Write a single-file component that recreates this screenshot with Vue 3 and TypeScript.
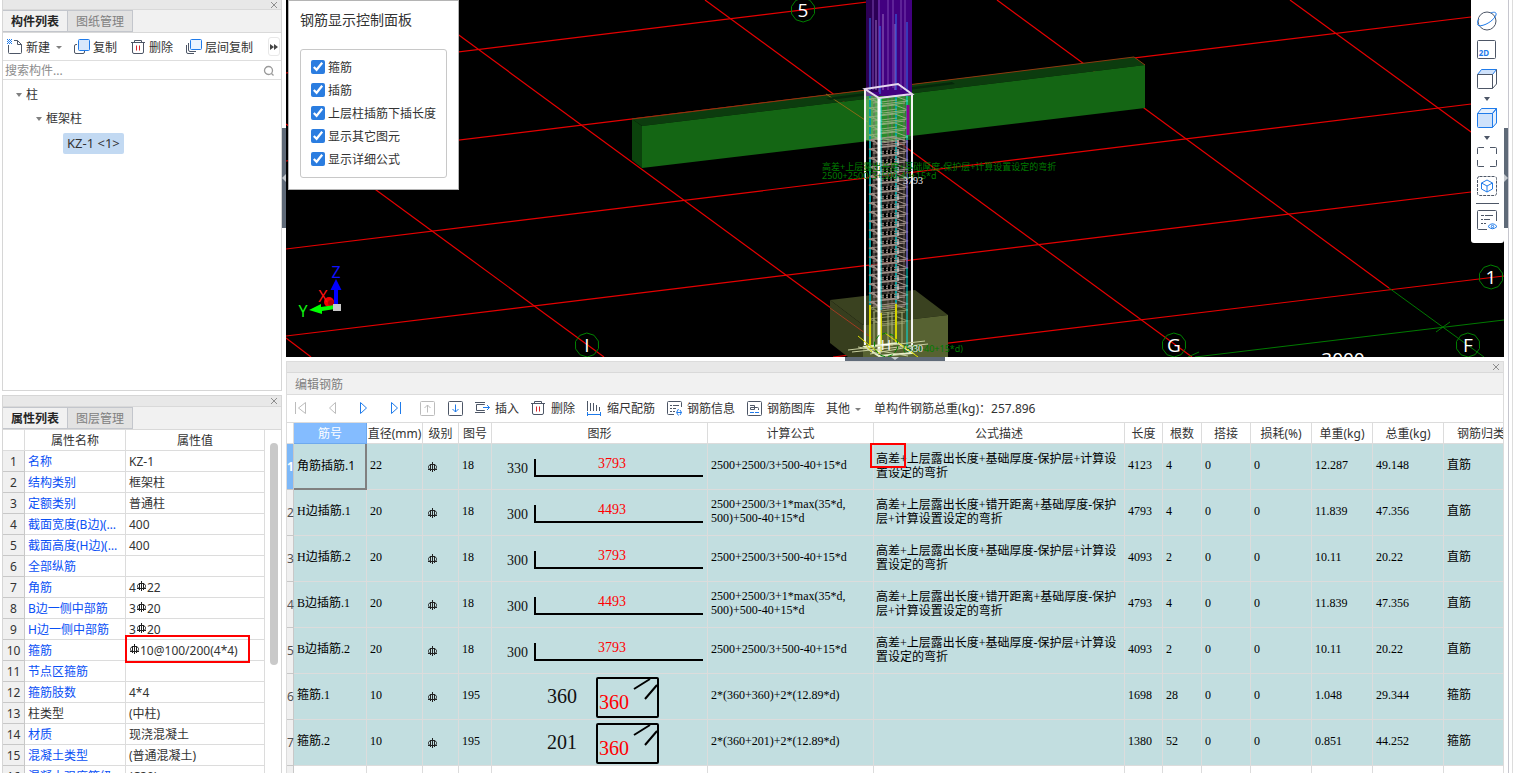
<script setup lang="ts">
import { ref } from 'vue'

interface Property {
  name: string
  value: string
  rebar?: string
  plain?: boolean
  marked?: boolean
}

interface Bar {
  name: string
  diameter: number
  figure: number
  shape: 'hook' | 'stirrup'
  side: number
  main: number
  formula: string
  note: string
  length: number
  count: number
  unit: string
  total: string
  kind: string
}

const properties: Property[] = [
  { name: '名称', value: 'KZ-1' },
  { name: '结构类别', value: '框架柱' },
  { name: '定额类别', value: '普通柱' },
  { name: '截面宽度(B边)(mm)', value: '400' },
  { name: '截面高度(H边)(mm)', value: '400' },
  { name: '全部纵筋', value: '' },
  { name: '角筋', value: '4', rebar: '22' },
  { name: 'B边一侧中部筋', value: '3', rebar: '20' },
  { name: 'H边一侧中部筋', value: '3', rebar: '20' },
  { name: '箍筋', value: '', rebar: '10@100/200(4*4)', marked: true },
  { name: '节点区箍筋', value: '' },
  { name: '箍筋肢数', value: '4*4' },
  { name: '柱类型', value: '(中柱)', plain: true },
  { name: '材质', value: '现浇混凝土' },
  { name: '混凝土类型', value: '(普通混凝土)' },
  { name: '混凝土强度等级', value: '(C30)' },
]

const shortFormula = '2500+2500/3+500-40+15*d'
const longFormula = '2500+2500/3+1*max(35*d,\n500)+500-40+15*d'
const shortNote = '高差+上层露出长度+基础厚度-保护层+计算设\n置设定的弯折'
const longNote = '高差+上层露出长度+错开距离+基础厚度-保护\n层+计算设置设定的弯折'

const bars: Bar[] = [
  { name: '角筋插筋.1', diameter: 22, figure: 18, shape: 'hook', side: 330, main: 3793, formula: shortFormula, note: shortNote, length: 4123, count: 4, unit: '12.287', total: '49.148', kind: '直筋' },
  { name: 'H边插筋.1', diameter: 20, figure: 18, shape: 'hook', side: 300, main: 4493, formula: longFormula, note: longNote, length: 4793, count: 4, unit: '11.839', total: '47.356', kind: '直筋' },
  { name: 'H边插筋.2', diameter: 20, figure: 18, shape: 'hook', side: 300, main: 3793, formula: shortFormula, note: shortNote, length: 4093, count: 2, unit: '10.11', total: '20.22', kind: '直筋' },
  { name: 'B边插筋.1', diameter: 20, figure: 18, shape: 'hook', side: 300, main: 4493, formula: longFormula, note: longNote, length: 4793, count: 4, unit: '11.839', total: '47.356', kind: '直筋' },
  { name: 'B边插筋.2', diameter: 20, figure: 18, shape: 'hook', side: 300, main: 3793, formula: shortFormula, note: shortNote, length: 4093, count: 2, unit: '10.11', total: '20.22', kind: '直筋' },
  { name: '箍筋.1', diameter: 10, figure: 195, shape: 'stirrup', side: 360, main: 360, formula: '2*(360+360)+2*(12.89*d)', note: '', length: 1698, count: 28, unit: '1.048', total: '29.344', kind: '箍筋' },
  { name: '箍筋.2', diameter: 10, figure: 195, shape: 'stirrup', side: 201, main: 360, formula: '2*(360+201)+2*(12.89*d)', note: '', length: 1380, count: 52, unit: '0.851', total: '44.252', kind: '箍筋' },
]

const headers = ['直径(mm)', '级别', '图号', '图形', '计算公式', '公式描述', '长度', '根数', '搭接', '损耗(%)', '单重(kg)', '总重(kg)', '钢筋归类']

const options = ref([
  { label: '箍筋', on: true },
  { label: '插筋', on: true },
  { label: '上层柱插筋下插长度', on: true },
  { label: '显示其它图元', on: true },
  { label: '显示详细公式', on: true },
])

const keyword = ref('')

// Axis grid lines of the 3D view: x1, y1, x2, y2
const gridLines = [
  [286, 73, 884, 0], [286, 161, 1504, 13], [286, 249, 1504, 100], [286, 336, 1504, 188], [833, 357, 1504, 276],
  [411, 0, 895, 355], [286, 124, 604, 357], [286, 338, 311, 357], [705, 0, 1192, 357], [997, 0, 1389, 288], [1290, 0, 1504, 156],
]

const bubbles = [
  { x: 803, y: 10, text: '5' },
  { x: 587, y: 345, text: 'I' },
  { x: 1174, y: 345, text: 'G' },
  { x: 1468, y: 345, text: 'F' },
  { x: 1491, y: 277, text: '1' },
]

function octagon(cx: number, cy: number): string {
  const pts: string[] = []
  for (let i = 0; i < 10; i++) {
    const a = (i * Math.PI) / 5 + 0.3
    pts.push(`${(cx + 12 * Math.cos(a)).toFixed(1)},${(cy + 12 * Math.sin(a)).toFixed(1)}`)
  }
  return pts.join(' ')
}

function hoops(from: number, to: number, step: number): string {
  let d = ''
  for (let y = from; y < to; y += step) {
    d += `M869 ${y}L883 ${y + 5}L908 ${y + 2}L895 ${y - 3}Z`
    d += `M873 ${y + 4}L897 ${y + 1}M880 ${y + 7}L905 ${y + 4}M872 ${y - 1}L879 ${y + 5}`
  }
  return d
}

const upperHoops = hoops(99, 138, 9)
const lowerHoops = hoops(140, 306, 9)
const baseHoops = hoops(308, 330, 11)
</script>

<template>
  <div class="workspace">
    <aside class="side">
      <section class="panel components">
        <div class="strip"><button class="close" aria-label="关闭构件列表"><svg viewBox="0 0 8 8"><path d="M1 1L7 7M7 1L1 7" /></svg></button></div>
        <div class="tabs">
          <button class="tab active">构件列表</button>
          <button class="tab">图纸管理</button>
        </div>
        <div class="tools">
          <button class="tool">
            <svg class="ico" viewBox="0 0 16 16"><path d="M1.500 6V13.500Q1.500 14.500 2.500 14.500H13.500Q14.500 14.500 14.500 13.500V5.500L10.500 1.500H7M10.500 1.500V5.500H14.500" stroke="#4d5666" /><path d="M0 .5h5M0 2.500h5M0 4.500h5" stroke="#1f7bea" stroke-dasharray="1 1" /><path d="M1 1.500h4M1 3.500h4" stroke="#1f7bea" stroke-dasharray="1 1" /></svg>
            新建<i class="caret"></i>
          </button>
          <button class="tool">
            <svg class="ico" viewBox="0 0 16 16"><path d="M3 5.500H2Q.5 5.500 .5 7V13Q.5 14.500 2 14.500H9Q10.500 14.500 10.500 13V12" stroke="#4d5666" /><rect x="4.500" y=".5" width="11" height="11" rx="1" fill="#d9e8fb" stroke="#1f7bea" /></svg>
            复制
          </button>
          <button class="tool">
            <svg class="ico" viewBox="0 0 16 16"><path d="M1 3.500H15M4.500 3V1.500H11.500V3M2.500 4V13Q2.500 14.500 4 14.500H12Q13.500 14.500 13.500 13V4" stroke="#4d5666" /><path d="M6.500 6.500V11.500M9.500 6.500V11.500" stroke="#d9262b" /></svg>
            删除
          </button>
          <button class="tool">
            <svg class="ico" viewBox="0 0 16 16"><path d="M.5 6V13Q.5 14.500 2 14.500H8M2.500 4V11Q2.500 12.500 4 12.500H10" stroke="#4d5666" /><rect x="4.500" y=".5" width="11" height="10" rx="1" fill="#eaf3fe" stroke="#1f7bea" /></svg>
            层间复制
          </button>
          <button class="more" aria-label="更多"><svg viewBox="0 0 8 6"><path d="M0 0L4 3L0 6ZM4 0L8 3L4 6Z" /></svg></button>
        </div>
        <label class="search">
          <input v-model="keyword" type="text" placeholder="搜索构件..." aria-label="搜索构件" />
          <svg viewBox="0 0 12 12"><circle cx="5.500" cy="5.500" r="4" /><path d="M8.500 8.500L10.500 10.500" /></svg>
        </label>
        <ul class="tree">
          <li class="level1"><i class="caret"></i>柱</li>
          <li class="level2"><i class="caret"></i>框架柱</li>
          <li class="level3"><span class="chosen">KZ-1 &lt;1&gt;</span></li>
        </ul>
      </section>

      <section class="panel attributes">
        <div class="strip"><button class="close" aria-label="关闭属性列表"><svg viewBox="0 0 8 8"><path d="M1 1L7 7M7 1L1 7" /></svg></button></div>
        <div class="tabs">
          <button class="tab active">属性列表</button>
          <button class="tab">图层管理</button>
        </div>
        <div class="props-wrap">
          <table class="props">
            <colgroup><col class="p-num" /><col class="p-name" /><col /></colgroup>
            <thead><tr><th></th><th>属性名称</th><th>属性值</th></tr></thead>
            <tbody>
              <tr v-for="(p, i) in properties" :key="p.name">
                <th scope="row">{{ i + 1 }}</th>
                <td class="pname" :class="{ plain: p.plain }">{{ p.name }}</td>
                <td class="pvalue">
                  {{ p.value }}<template v-if="p.rebar"><svg class="grade raised" viewBox="0 0 10 10"><path d="M4.500 0V10M2.500 2V9M6.500 2V9M0 7.500H9M2 2.500H7L8.500 4.500V5.500L7.500 7.500M1.500 7.500L.5 5.500V4.500L2 2.500" /></svg>{{ p.rebar }}</template>
                  <span v-if="p.marked" class="mark"></span>
                </td>
              </tr>
            </tbody>
          </table>
          <div class="scroll"><div class="thumb"></div></div>
        </div>
      </section>
    </aside>

    <div class="gutter"><div class="grip"><svg viewBox="0 0 4 8"><path d="M4 0L0 4L4 8Z" /></svg></div></div>

    <main class="center">
      <section class="view">
        <svg class="scene" viewBox="286 0 1218 357" preserveAspectRatio="xMinYMin slice">
          <g stroke="#e60000" stroke-width="1.200">
            <line v-for="(l, i) in gridLines" :key="i" :x1="l[0]" :y1="l[1]" :x2="l[2]" :y2="l[3]" />
          </g>
          <g stroke="#007a00" fill="none">
            <path d="M1195 357L1504 320M1389 288L1484 357M1436 332L1450 322M1188 357L1199 352" />
          </g>
          <polygon points="632,119 1134,57 1145,65 642,126" fill="#0c3c0e" />
          <polygon points="632,119 642,126 642,168 632,160" fill="#0b420c" />
          <polygon points="642,126 1145,65 1145,108 642,168" fill="#146614" />
          <path d="M632 119L1134 57L1145 65" stroke="#8c3a10" fill="none" />
          <path d="M826 94L868 122" stroke="#8a6a14" fill="none" />
          <path d="M826 98L952 82L955 84L830 100Z" fill="#06280a" />

          <polygon points="830,300 915,290 948,315 863,325" fill="#3a4220" />
          <polygon points="830,300 863,325 863,357 848,357 830,343" fill="#373e1e" />
          <polygon points="863,325 948,315 948,357 863,357" fill="#576232" />
          <path d="M830 308L872 338" stroke="#a03a20" fill="none" />

          <rect x="866" y="0" width="46" height="96" fill="#420080" />
          <rect x="866" y="0" width="12" height="92" fill="#2c0056" />
          <g fill="none">
            <path d="M873 0V90M879 0V92M888 0V90M893 0V88M901 0V90M905 0V90" stroke="#7a45b0" />
            <path d="M876 20V90M883 14V90M895 24V90" stroke="#9a6cc0" />
            <path d="M870 18V90M880 26V94M896 14V90M907 22V92" stroke="#2f6ff0" />
          </g>

          <rect x="865" y="96" width="47" height="44" fill="#45b845" opacity="0.450" />
          <path d="M878 98L865 90V140H878Z" fill="#b8e8b0" opacity="0.300" />
          <rect x="872" y="140" width="34" height="168" fill="#3c3430" opacity="0.600" />
          <g fill="none">
            <path d="M870 96V305M896 96V305" stroke="#00a0a0" stroke-width="2" />
            <path d="M874 96V305M888 98V310M892 98V310M904 96V305" stroke="#6e6460" />
            <path :d="upperHoops" stroke="#8fb07c" />
            <path :d="lowerHoops" stroke="#a09088" stroke-width="1.200" />
            <path :d="baseHoops" stroke="#8c9064" />
            <path d="M885 150V300M889 150V300M893 150V300" stroke="#000" stroke-dasharray="4 5" stroke-width="2" />
            <path d="M881 98V310M907 96V346" stroke="#00e5e5" />
            <path d="M898 140V300" stroke="#fff" stroke-dasharray="6 3" />
            <path d="M908 105V135" stroke="#900090" stroke-width="3" />
            <path d="M907 140V268" stroke="#b030c0" />
            <path d="M870 305V345M881 313V352M896 304V342" stroke="#d4d400" stroke-width="2" />
            <path d="M874 312V350M888 312V346M892 312V346M902 312V344" stroke="#aab27c" />
            <path d="M865 89V345M912 95V350" stroke="#f4f4f4" stroke-width="2" />
            <path d="M879 98V354" stroke="#fff" stroke-width="3" />
            <path d="M865 89L898 84L912 94L879 98Z" stroke="#e6d8ee" stroke-width="2" />
            <path d="M865 347L879 356L912 353L898 343Z" stroke="#e8efcc" stroke-width="2" />
            <path d="M848 350L925 341M852 352L928 344M858 347L908 356M870 354L920 345" stroke="#c8cfa0" />
            <path d="M858 336L880 354M885 333L918 357M866 345L872 352" stroke="#dede00" />
          </g>

          <g fill="none" stroke="#008200">
            <polygon v-for="b in bubbles" :key="b.text" :points="octagon(b.x, b.y)" />
            <polygon :points="octagon(886, 345)" stroke-dasharray="5 3" />
          </g>
          <g class="bubble-text" text-anchor="middle">
            <text v-for="b in bubbles" :key="b.text" :x="b.x" :y="b.y + 7">{{ b.text }}</text>
            <text x="886" y="350" class="small-no">H</text>
            <text x="1343" y="366">3000</text>
          </g>
          <g class="scene-note">
            <text x="822" y="170">高差+上层露出长度+基础厚度-保护层+计算设置设定的弯折</text>
            <text x="822" y="179">2500+2500/3+500-40+15*d</text>
            <text x="903" y="352">(500-40+15*d)</text>
          </g>
          <g class="scene-length">
            <text x="903" y="184">3793</text>
            <text x="908" y="352">330</text>
          </g>

          <path d="M334 308V290H330.500L336 279L341.500 290H338V308Z" fill="#0000ff" />
          <circle cx="329" cy="302" r="5" fill="#f00000" /><circle cx="331" cy="303" r="3" fill="#b00000" />
          <path d="M335 305L321 307V304L309 310L322 314V311L335 309Z" fill="#00ff00" />
          <rect x="333" y="304" width="8" height="7" fill="#c8c8c8" />
          <g class="axis" text-anchor="middle">
            <text x="336" y="278" fill="#1010ff">Z</text>
            <text x="323" y="302" fill="#ff1010">X</text>
            <text x="303" y="317" fill="#10f010">Y</text>
          </g>
        </svg>

        <form class="control" @submit.prevent>
          <h2>钢筋显示控制面板</h2>
          <div class="options">
            <label v-for="o in options" :key="o.label"><input v-model="o.on" type="checkbox" /><span>{{ o.label }}</span></label>
          </div>
        </form>

        <nav class="viewbar">
          <button aria-label="动态观察"><svg viewBox="0 0 20 20"><circle cx="10" cy="10" r="9" stroke="#4d5666" /><path d="M2 8C-1 13 0 15.500 5 14.500C10 13.500 17 9 19 4C20 .5 16 1 13.500 2" stroke="#1f7bea" /></svg></button>
          <button aria-label="二维"><svg viewBox="0 0 20 20"><rect x=".5" y=".5" width="18" height="18" rx="1" stroke="#4d5666" /><text x="7" y="16" text-anchor="middle" class="two">2D</text></svg></button>
          <button aria-label="俯视"><svg viewBox="0 0 20 20"><path d="M.5 5.500L4.500 .5H19.500L15.500 5.500Z" fill="#cfe2fb" stroke="#1f7bea" /><path d="M.5 5.500H15.500V19.500H1.500Q.5 19.500 .5 18.500ZM15.500 19.500L19.500 15V.5" stroke="#4d5666" /></svg></button>
          <i class="caret dark"></i>
          <button aria-label="实体"><svg viewBox="0 0 20 20"><path d="M.5 5.500L4.500 .5H19.500L15.500 5.500ZM15.500 19.500L19.500 15V.5L15.500 5.500Z" fill="#e6f0fd" stroke="#1f7bea" /><path d="M.5 5.500H15.500V19.500H1.500Q.5 19.500 .5 18.500Z" fill="#cfe2fb" stroke="#1f7bea" /></svg></button>
          <i class="caret dark"></i>
          <button aria-label="全屏"><svg viewBox="0 0 20 20"><path d="M.5 7V1.500Q.5 .5 1.500 .5H7M13 .5H18.500Q19.500 .5 19.500 1.500V7M19.500 13V18.500Q19.500 19.500 18.500 19.500H13M7 19.500H1.500Q.5 19.500 .5 18.500V13" stroke="#4d5666" /></svg></button>
          <button aria-label="局部三维"><svg viewBox="0 0 20 20"><rect x=".5" y=".5" width="19" height="19" rx="2" stroke="#4d5666" stroke-dasharray="3 1" /><path d="M10 4L15.500 7V13L10 16L4.500 13V7ZM4.500 7L10 10L15.500 7M10 10V16" stroke="#1f7bea" /></svg></button>
          <hr />
          <button aria-label="显示设置"><svg viewBox="0 0 20 20"><path d="M10 19.500H1.500Q.5 19.500 .5 18.500V1.500Q.5 .5 1.500 .5H18.500Q19.500 .5 19.500 1.500V11M4 5.500H7M8 5.500H16M4 9.500H6M7 9.500H13M4 13.500H6M7 13.500H9" stroke="#4d5666" /><path d="M11 16.500Q15.500 11 20 16.500Q15.500 21 11 16.500Z" stroke="#1f7bea" /><circle cx="15.500" cy="16.500" r="1.200" stroke="#1f7bea" /></svg></button>
        </nav>
      </section>

      <div class="hgutter"><div class="hgrip"><svg viewBox="0 0 8 3"><path d="M0 0H8L4 3Z" /></svg></div></div>

      <section class="editor">
        <div class="strip"><button class="close" aria-label="关闭编辑钢筋"><svg viewBox="0 0 8 8"><path d="M1 1L7 7M7 1L1 7" /></svg></button></div>
        <h2 class="heading">编辑钢筋</h2>
        <div class="bar">
          <div class="moves">
            <button disabled aria-label="第一条"><svg class="ico" viewBox="0 0 16 16"><path d="M3.500 2V14M13.500 2.500V13.500L6.500 8Z" stroke="#bcbcbc" /></svg></button>
            <button disabled aria-label="上一条"><svg class="ico" viewBox="0 0 16 16"><path d="M11.500 2.500V13.500L5.500 8Z" stroke="#bcbcbc" /></svg></button>
            <button aria-label="下一条"><svg class="ico" viewBox="0 0 16 16"><path d="M4.500 2.500V13.500L10.500 8Z" stroke="#1f7bea" /></svg></button>
            <button aria-label="最后一条"><svg class="ico" viewBox="0 0 16 16"><path d="M12.500 2V14M3.500 2.500V13.500L9.500 8Z" stroke="#1f7bea" /></svg></button>
            <button disabled aria-label="上移"><svg class="ico" viewBox="0 0 16 16"><rect x=".5" y="1.500" width="14" height="14" rx="1" stroke="#bcbcbc" /><path d="M7.500 12.500V5M4.500 8L7.500 5L10.500 8" stroke="#bcbcbc" /></svg></button>
          </div>
          <button class="act" aria-label="下移"><svg class="ico" viewBox="0 0 16 16"><rect x="1.500" y="1.500" width="14" height="14" rx="1" stroke="#4d5666" /><path d="M8.500 4.500V12M5.500 9L8.500 12L11.500 9" stroke="#1f7bea" /></svg></button>
          <button class="act"><svg class="ico" viewBox="0 0 16 16"><path d="M1 2.500H11M1 12.500H11M10.500 5V4.500H2.500V10.500H10.500V10" stroke="#4d5666" /><path d="M9 7.500H15.500M13 5L15.500 7.500L13 10" stroke="#1f7bea" /></svg>插入</button>
          <button class="act"><svg class="ico" viewBox="0 0 16 16"><path d="M1 3.500H15M4.500 3V1.500H11.500V3M2.500 4V13Q2.500 14.500 4 14.500H12Q13.500 14.500 13.500 13V4" stroke="#4d5666" /><path d="M6.500 6.500V11.500M9.500 6.500V11.500" stroke="#d9262b" /></svg>删除</button>
          <button class="act"><svg class="ico" viewBox="0 0 16 16"><path d="M1.500 1V11M4.500 3V11M7.500 3V11M10.500 5V11M13.500 7V11" stroke="#4d5666" /><path d="M1.500 12V16M14.500 12V16M1.500 14.500H14.500" stroke="#1f7bea" /></svg>缩尺配筋</button>
          <button class="act"><svg class="ico" viewBox="0 0 16 16"><path d="M8 14.500H2.500Q1.500 14.500 1.500 13.500V2.500Q1.500 1.500 2.500 1.500H14.500Q15.500 1.500 15.500 2.500V7M4 5.500H6M7 5.500H13M4 8.500H6M7 8.500H10M4 11.500H6M7 11.500H9" stroke="#4d5666" /><path d="M12.500 9L10.500 12.500L12.500 15.500M11 12.500H15.500M14 10L15.500 12.500L14 15" stroke="#1f7bea" /></svg>钢筋信息</button>
          <button class="act"><svg class="ico" viewBox="0 0 16 16"><rect x="1.500" y="1.500" width="14" height="14" rx="1" stroke="#4d5666" /><path d="M4 5.500H8.500V9.500H4.500V7.500H11.500Q12.500 7.500 12.500 8.500V10" stroke="#4d5666" /><path d="M4 12.500H8M9 12.500H13" stroke="#1f7bea" /></svg>钢筋图库</button>
          <button class="act">其他<i class="caret"></i></button>
          <output class="weight">单构件钢筋总重(kg)：257.896</output>
        </div>
        <div class="grid-wrap">
          <table class="grid">
            <colgroup>
              <col class="g-head" /><col class="g-name" /><col class="g-dia" /><col class="g-lvl" /><col class="g-fig" /><col class="g-shape" /><col class="g-form" /><col /><col class="g-len" /><col class="g-cnt" /><col class="g-lap" /><col class="g-unit" /><col class="g-unit" /><col class="g-total" /><col class="g-kind" />
            </colgroup>
            <thead>
              <tr><th></th><th class="picked">筋号</th><th v-for="h in headers" :key="h">{{ h }}</th></tr>
            </thead>
            <tbody>
              <tr v-for="(b, i) in bars" :key="b.name" :class="{ current: i === 0 }">
                <th scope="row">{{ i + 1 }}</th>
                <td class="name">{{ b.name }}</td>
                <td>{{ b.diameter }}</td>
                <td class="lvl"><svg class="grade" viewBox="0 0 10 10"><path d="M4.500 0V10M2.500 2V9M6.500 2V9M0 7.500H9M2 2.500H7L8.500 4.500V5.500L7.500 7.500M1.500 7.500L.5 5.500V4.500L2 2.500" /></svg></td>
                <td>{{ b.figure }}</td>
                <td class="shape">
                  <svg v-if="b.shape === 'hook'" viewBox="0 0 216 45" class="figure">
                    <text x="15" y="29" class="n14">{{ b.side }}</text>
                    <text x="106" y="24" class="n14 red">{{ b.main }}</text>
                    <path d="M43 15V32H211" />
                  </svg>
                  <svg v-else viewBox="0 0 216 45" class="figure">
                    <text x="55" y="29" class="n20">{{ b.side }}</text>
                    <text x="107" y="35" class="n20 red">{{ b.main }}</text>
                    <rect x="105" y="4" width="61" height="39" rx="1" />
                    <path d="M142 15L158 5M153 25L165 11" />
                  </svg>
                </td>
                <td>{{ b.formula }}</td>
                <td class="note">{{ b.note }}<span v-if="i === 0" class="mark"></span></td>
                <td>{{ b.length }}</td>
                <td>{{ b.count }}</td>
                <td>0</td>
                <td>0</td>
                <td>{{ b.unit }}</td>
                <td>{{ b.total }}</td>
                <td>{{ b.kind }}</td>
              </tr>
              <tr class="blank"><th scope="row">8</th><td v-for="n in 14" :key="n"></td></tr>
            </tbody>
          </table>
        </div>
      </section>
    </main>

    <div class="gutter right"><div class="grip"><svg viewBox="0 0 4 8"><path d="M0 0L4 4L0 8Z" /></svg></div></div>
    <div class="dock"></div>
  </div>
</template>

<style>
body {
  margin: 0;
  overflow: hidden;
}
</style>

<style scoped>
.workspace {
  display: grid;
  grid-template-columns: 282px 4px 1fr 4px 5px;
  height: 100vh;
  background: #fff;
  color: #333;
  font: 12px/16px "Noto Sans", "Noto Sans CJK SC", sans-serif;
  overflow: hidden;
}
.workspace * {
  box-sizing: border-box;
}
button {
  font: inherit;
  color: inherit;
  background: none;
  border: 0;
  padding: 0;
  margin: 0;
}
.side {
  display: flex;
  flex-direction: column;
  gap: 4px;
  padding-left: 2px;
  min-height: 0;
}
.panel {
  display: flex;
  flex-direction: column;
  border: 1px solid #d6d6d6;
  min-height: 0;
  overflow: hidden;
}
.components {
  flex: 391 1 0;
  border-top: 0;
}
.attributes {
  flex: 378 1 0;
  border-bottom: 0;
}
.strip {
  flex: none;
  display: flex;
  justify-content: flex-end;
  align-items: center;
  height: 11px;
  padding-right: 3px;
  background: #e8e8e8;
  border-bottom: 1px solid #d9d9d9;
}
.components .strip {
  height: 10px;
}
.close {
  display: flex;
}
.close svg {
  width: 8px;
  height: 8px;
  stroke: #8e8e8e;
}
.tabs {
  flex: none;
  display: flex;
  height: 23px;
  background: #f1f1f1;
  border-bottom: 1px solid #d9d9d9;
}
.tab {
  width: 65px;
  padding-top: 2px;
  background: #e2e2e2;
  border: 1px solid #c3c6cc;
  border-left: 0;
  color: #808080;
}
.tab.active {
  background: #f1f1f1;
  color: #262626;
  font-weight: 700;
}
.ico {
  width: 16px;
  height: 16px;
  fill: none;
  flex: none;
}
.tools {
  flex: none;
  display: flex;
  align-items: center;
  gap: 13px;
  height: 28px;
  padding: 2px 1px 0 4px;
  border-bottom: 1px solid #dedede;
}
.tool {
  display: flex;
  align-items: center;
  gap: 3px;
  white-space: nowrap;
}
.tool .ico,
.act .ico {
  margin-bottom: 2px;
}
.caret {
  width: 0;
  height: 0;
  border: 3px solid transparent;
  border-top: 4px solid #808080;
  border-bottom: 0;
}
.tool .caret {
  margin: 0 -1px 0 3px;
  border-top-width: 3px;
}
.more {
  display: flex;
  justify-content: center;
  align-items: center;
  flex: none;
  width: 12px;
  height: 19px;
  margin: 0 0 2px auto;
  border: 1px solid #e8e8e8;
  border-radius: 3px;
}
.more svg {
  flex: none;
  width: 8px;
  height: 6px;
  fill: #444;
}
.search {
  flex: none;
  display: flex;
  align-items: center;
  height: 19px;
  padding: 1px 6px 0 2px;
  border-bottom: 1px solid #dedede;
}
.search input {
  flex: 1;
  min-width: 0;
  border: 0;
  padding: 0;
  outline: 0;
  font: inherit;
}
.search input::placeholder {
  color: #8c8c8c;
}
.search svg {
  width: 12px;
  height: 12px;
  fill: none;
  stroke: #9a9a9a;
  stroke-width: 1.300;
}
.tree {
  list-style: none;
  margin: 0;
  padding: 3px 0 0;
}
.tree li {
  display: flex;
  align-items: center;
  gap: 4px;
  height: 24px;
}
.level1 {
  padding-left: 13px;
}
.level2 {
  padding-left: 33px;
}
.level3 {
  padding-left: 60px;
}
.chosen {
  padding: 2px 4px;
  border-radius: 2px;
  background: #c2d9f2;
  font-size: 13px;
  line-height: 17px;
}
.props-wrap {
  display: flex;
  flex: 1;
  min-height: 0;
  overflow: hidden;
}
.props {
  flex: 1;
  align-self: flex-start;
  border-collapse: separate;
  border-spacing: 0;
  table-layout: fixed;
  width: 0;
}
.p-num {
  width: 22px;
}
.p-name {
  width: 101px;
}
.props th,
.props td {
  height: 21px;
  padding: 2px 3px 0;
  border-right: 1px solid #dcdcdc;
  border-bottom: 1px solid #dcdcdc;
  font-weight: 400;
  white-space: nowrap;
}
.props tbody th {
  padding: 2px 0 0;
  background: #f0f0f0;
  border-color: #c8c8c8;
}
.pname {
  overflow: hidden;
  text-overflow: ellipsis;
  color: #0a50f5;
}
.pname.plain {
  color: #333;
}
.pvalue {
  position: relative;
}
.grade {
  width: 10px;
  height: 10px;
  fill: none;
  stroke: #222;
}
.raised {
  vertical-align: 1px;
  margin: 0 0 0 1px;
}
.mark {
  position: absolute;
  border: 2px solid #f00;
}
.pvalue .mark {
  inset: -5px 14px -3px -1px;
}
.scroll {
  width: 16px;
  padding: 13px 3px 0 5px;
}
.thumb {
  height: 222px;
  border-radius: 4px;
  background: #c9c9c9;
}
.gutter {
  display: flex;
  flex-direction: column;
  background: #fff;
}
.grip {
  display: flex;
  align-items: center;
  height: 100px;
  margin-top: 128px;
  background: #5f6a78;
}
.grip svg {
  width: 4px;
  height: 8px;
  fill: #c5c9ce;
}
.dock {
  border-left: 1px solid #c6c6ce;
  border-right: 1px solid #dcdcdc;
}
.center {
  display: flex;
  flex-direction: column;
  min-width: 0;
  min-height: 0;
}
.view {
  position: relative;
  flex: 357 1 0;
  min-height: 0;
  background: #000;
  overflow: hidden;
}
.scene {
  display: block;
  width: 100%;
  height: 100%;
}
.bubble-text {
  fill: #fff;
  font-family: "Open Sans", sans-serif;
  font-size: 19px;
}
.small-no {
  font-size: 14px;
}
.scene-note {
  fill: #007c00;
  font-size: 9px;
}
.scene-length {
  fill: #e8e8e8;
  font: 10px "Liberation Serif", serif;
}
.axis {
  font: 16px "Noto Sans", sans-serif;
}
.control {
  position: absolute;
  top: 0;
  left: 2px;
  width: 171px;
  padding: 10px 11px 11px;
  background: #fff;
  border: 1px solid #b4b4b4;
}
.control h2 {
  margin: 0 0 21px;
  font-size: 14px;
  line-height: 17px;
  font-weight: 400;
}
.options {
  padding: 6px 10px;
  border: 1px solid #c8c8c8;
  border-radius: 3px;
}
.options label {
  display: flex;
  align-items: center;
  gap: 3px;
  height: 23px;
  white-space: nowrap;
}
.options input {
  width: 14px;
  height: 14px;
  margin: 0 0 2px;
  accent-color: #2b7de0;
}
.viewbar {
  position: absolute;
  top: 0;
  right: 0;
  display: flex;
  flex-direction: column;
  align-items: center;
  width: 33px;
  padding: 11px 1px 13px 0;
  background: #fff;
  border-radius: 0 0 3px 3px;
}
.viewbar button {
  display: flex;
  margin-bottom: 9px;
}
.viewbar button:last-child {
  margin-bottom: 0;
}
.viewbar svg {
  width: 20px;
  height: 20px;
  fill: none;
}
.viewbar .two {
  font-size: 8px;
  font-weight: 700;
  fill: #1f7bea;
}
.viewbar .dark {
  margin: -1px 0 7px;
  border-top-color: #4d5666;
}
.viewbar hr {
  width: 23px;
  margin: -2px 0 6px;
  border: 0;
  border-top: 1px solid #4d5666;
}
.hgutter {
  flex: none;
  display: flex;
  justify-content: center;
  height: 4px;
}
.hgrip {
  display: flex;
  justify-content: center;
  width: 100px;
  background: #5f6a78;
}
.hgrip svg {
  width: 8px;
  height: 3px;
  fill: #c5c9ce;
}
.editor {
  flex: 412 1 0;
  display: flex;
  flex-direction: column;
  min-height: 0;
  border: 1px solid #dcdcdc;
  border-bottom: 0;
  overflow: hidden;
}
.heading {
  flex: none;
  height: 22px;
  margin: 0;
  padding: 1px 0 0 8px;
  background: #f1f1f1;
  border-bottom: 1px solid #dcdcdc;
  color: #808080;
  font-size: 12px;
  line-height: 21px;
  font-weight: 400;
}
.bar {
  flex: none;
  display: flex;
  align-items: center;
  gap: 11px;
  height: 28px;
  padding: 2px 0 0 5px;
  border-bottom: 1px solid #dcdcdc;
  white-space: nowrap;
}
.moves {
  display: flex;
  gap: 16px;
  margin-bottom: 2px;
}
.moves button {
  display: flex;
}
.act {
  display: flex;
  align-items: center;
  gap: 5px;
}
.act .caret {
  border-top-width: 3px;
}
.weight {
  padding-left: 2px;
}
.grid-wrap {
  flex: 1;
  min-height: 0;
  overflow: hidden;
}
.grid {
  width: calc(100% + 16px);
  table-layout: fixed;
  border-collapse: separate;
  border-spacing: 0;
}
.g-head { width: 7px; }
.g-name { width: 73px; }
.g-dia { width: 56px; }
.g-lvl { width: 36px; }
.g-fig { width: 33px; }
.g-shape { width: 216px; }
.g-form { width: 166px; }
.g-len { width: 38px; }
.g-cnt { width: 39px; }
.g-lap { width: 49px; }
.g-unit { width: 61px; }
.g-total { width: 71px; }
.g-kind { width: 75px; }
.grid th {
  height: 21px;
  padding: 2px 0 0;
  border-right: 1px solid #dcdcdc;
  border-bottom: 1px solid #dcdcdc;
  font-weight: 400;
  white-space: nowrap;
}
.grid .picked {
  background: #84bcff;
  border-color: #6ea9ee;
  color: #fff;
}
.grid tbody th {
  background: #f0f0f0;
  border-color: #c8c8c8;
  color: #555;
}
.grid .current th {
  background: #7db8f8;
  color: #fff;
  font-weight: 700;
}
.grid td {
  height: 46px;
  padding: 0 2px 3px 3px;
  background: #c2dee0;
  border-right: 1px solid #dcdcdc;
  border-bottom: 1px solid #dcdcdc;
  color: #000;
  font: 12px/14px "Liberation Serif", "Noto Sans CJK SC", serif;
  white-space: pre-line;
}
.grid .current .name {
  padding-bottom: 0;
  border-right: 2px solid #808080;
  border-bottom: 2px solid #808080;
  font-family: "Noto Sans", "Noto Sans CJK SC", sans-serif;
}
.grid .lvl {
  padding: 4px 0 0 5px;
}
.grid .shape {
  padding: 0;
}
.figure {
  display: block;
  width: 216px;
  height: 45px;
  fill: none;
  stroke: #000;
  stroke-width: 2;
}
.figure text {
  fill: #111;
  stroke: none;
  font-family: "Liberation Serif", serif;
}
.figure .red {
  fill: #f00;
}
.n14 {
  font-size: 14px;
}
.n20 {
  font-size: 20px;
}
.grid .note {
  position: relative;
  padding: 0 2px 1px;
}
.note .mark {
  top: -1px;
  left: -4px;
  width: 36px;
  height: 25px;
}
.grid .blank td {
  background: #fff;
}
</style>
